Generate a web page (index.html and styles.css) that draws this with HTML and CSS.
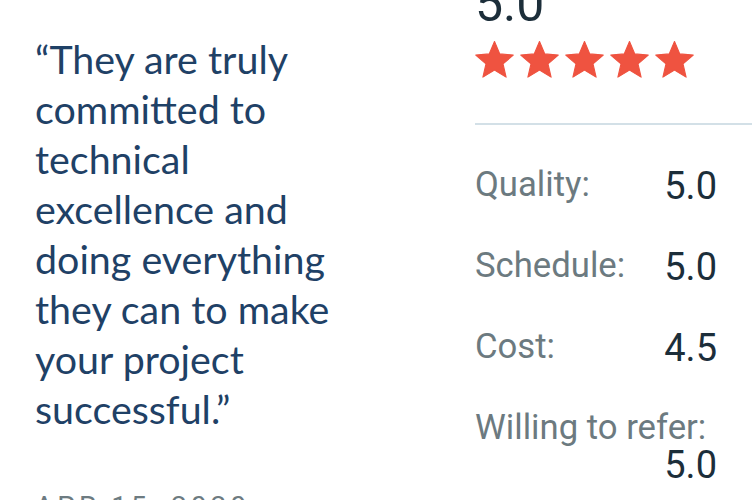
FILE: index.html
```html
<!DOCTYPE html>
<html lang="en">
<head>
<meta charset="utf-8">
<title>Review</title>
<link rel="stylesheet" href="styles.css">
</head>
<body>
<div class="review">
  <div class="quote-col">
    <p class="quote">“They are truly committed to technical excellence and doing everything they can to make your project successful.”</p>
    <div class="date">APR 15, 2020</div>
  </div>
  <div class="scores">
    <div class="overall">5.0</div>
    <div class="stars">
      <svg class="star" viewBox="1.6 1.6 20.8 20" aria-hidden="true"><path d="M12 17.27L18.18 21l-1.64-7.03L22 9.24l-7.19-.61L12 2 9.19 8.63 2 9.24l5.46 4.73L5.82 21z"/></svg>
      <svg class="star" viewBox="1.6 1.6 20.8 20" aria-hidden="true"><path d="M12 17.27L18.18 21l-1.64-7.03L22 9.24l-7.19-.61L12 2 9.19 8.63 2 9.24l5.46 4.73L5.82 21z"/></svg>
      <svg class="star" viewBox="1.6 1.6 20.8 20" aria-hidden="true"><path d="M12 17.27L18.18 21l-1.64-7.03L22 9.24l-7.19-.61L12 2 9.19 8.63 2 9.24l5.46 4.73L5.82 21z"/></svg>
      <svg class="star" viewBox="1.6 1.6 20.8 20" aria-hidden="true"><path d="M12 17.27L18.18 21l-1.64-7.03L22 9.24l-7.19-.61L12 2 9.19 8.63 2 9.24l5.46 4.73L5.82 21z"/></svg>
      <svg class="star" viewBox="1.6 1.6 20.8 20" aria-hidden="true"><path d="M12 17.27L18.18 21l-1.64-7.03L22 9.24l-7.19-.61L12 2 9.19 8.63 2 9.24l5.46 4.73L5.82 21z"/></svg>
    </div>
    <div class="divider"></div>
    <div class="rows">
      <div class="row"><span class="label">Quality:</span><span class="value">5.0</span></div>
      <div class="row"><span class="label">Schedule:</span><span class="value">5.0</span></div>
      <div class="row"><span class="label">Cost:</span><span class="value">4.5</span></div>
      <div class="row"><span class="label">Willing to refer:</span><span class="value">5.0</span></div>
    </div>
  </div>
</div>
</body>
</html>
```
FILE: styles.css
```css
html, body {
  margin: 0;
  padding: 0;
  background: #ffffff;
  overflow: hidden;
}

body {
  font-family: Roboto, "Liberation Sans", sans-serif;
}

.review {
  display: flex;
  align-items: flex-start;
  padding-left: 35px;
}

.quote-col {
  flex: 0 0 320px;
  padding-top: 34px;
}

.quote {
  margin: 0;
  font-family: Lato, "Open Sans", sans-serif;
  font-size: 39.4px;
  line-height: 50px;
  color: #1f4166;
}

.date {
  margin-top: 56px;
  font-family: Roboto, "Liberation Sans", sans-serif;
  font-size: 28px;
  line-height: 34px;
  letter-spacing: 4px;
  color: #6d7b81;
}

.scores {
  flex: 1;
  margin-left: 120px;
  margin-top: -21px;
}

.overall {
  font-size: 50px;
  line-height: 50px;
  color: #1c2e3a;
}

.stars {
  display: flex;
  gap: 6px;
  margin-top: 11px;
}

.star {
  display: block;
  width: 39px;
  height: 39px;
  fill: #ef5340;
  stroke: #ef5340;
  stroke-width: 0.6;
  stroke-linejoin: round;
}

.divider {
  margin-top: 44px;
  height: 2px;
  background: #d3e0e7;
}

.rows {
  display: flex;
  flex-direction: column;
  gap: 41px;
  margin-top: 41px;
  padding-right: 35px;
}

.row {
  display: flex;
  flex-wrap: wrap;
  justify-content: space-between;
  align-items: flex-start;
}

.label {
  font-size: 34.7px;
  line-height: 36px;
  color: #6c7a80;
}

.value {
  margin-left: auto;
  font-size: 38px;
  line-height: 40px;
  color: #1c2e3a;
}
```
